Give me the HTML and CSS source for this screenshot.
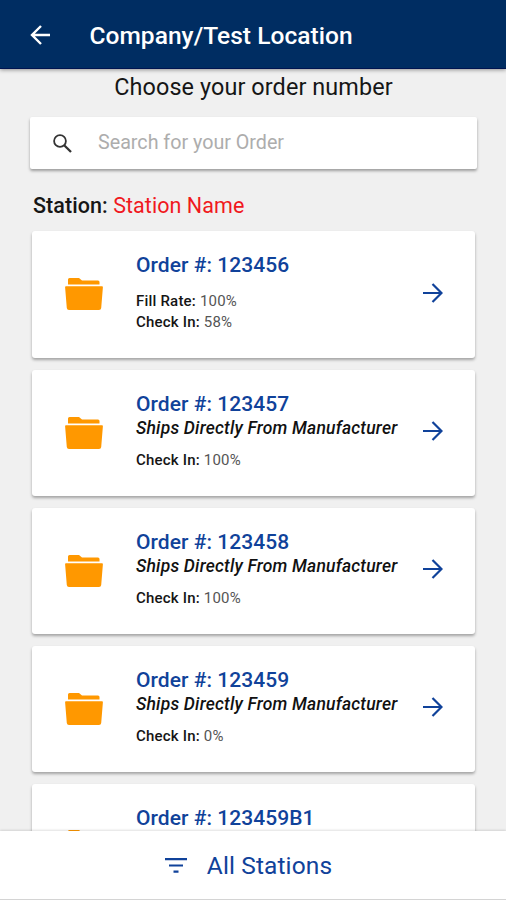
FILE: index.html
```html
<!DOCTYPE html>
<html lang="en">
<head>
<meta charset="utf-8">
<title>Company/Test Location</title>
<link rel="stylesheet" href="styles.css">
</head>
<body>
<svg class="defs" width="0" height="0">
  <symbol id="folder" viewBox="0 0 38 32"><path d="M3 6.600V1.500Q3 0 4.500 0H14L17 2.500H33Q34.500 2.500 34.500 4V6.600Z"/><path d="M1 8.200H37Q38 8.200 37.900 9.300L36.200 30Q36 32 34 32H4Q2 32 1.800 30L.1 9.300Q0 8.200 1 8.200Z"/></symbol>
  <symbol id="arrow" viewBox="0 0 20 20"><path d="M0 10H18M9.500 1L18.500 10L9.500 19" fill="none" stroke="currentColor" stroke-width="2.200"/></symbol>
</svg>
<div class="screen">
  <header class="bar">
    <svg class="back" viewBox="0 0 20 20"><path d="M20 10H2M11 1L2 10L11 19" fill="none" stroke="currentColor" stroke-width="2.400"/></svg>
    <h1 class="title">Company/Test Location</h1>
  </header>
  <main class="content">
    <h2 class="prompt"><span>Choose your order number</span></h2>
    <div class="search">
      <svg class="glass" viewBox="0 0 19 19"><circle cx="7" cy="7" r="5.900" fill="none" stroke="currentColor" stroke-width="1.800"/><path d="M11.200 11.200L18 18" stroke="currentColor" stroke-width="2.300"/></svg>
      <span class="placeholder">Search for your Order</span>
    </div>
    <p class="station"><b>Station:</b> <span class="station-name">Station Name</span></p>
    <section class="orders">
      <article class="card tall">
        <svg class="folder"><use href="#folder"/></svg>
        <div class="info">
          <h3 class="order">Order #: 123456</h3>
          <p class="stat first"><b>Fill Rate:</b> 100%</p>
          <p class="stat"><b>Check In:</b> 58%</p>
        </div>
        <svg class="arrow"><use href="#arrow"/></svg>
      </article>
      <article class="card">
        <svg class="folder"><use href="#folder"/></svg>
        <div class="info">
          <h3 class="order">Order #: 123457</h3>
          <p class="ships">Ships Directly From Manufacturer</p>
          <p class="stat"><b>Check In:</b> 100%</p>
        </div>
        <svg class="arrow"><use href="#arrow"/></svg>
      </article>
      <article class="card">
        <svg class="folder"><use href="#folder"/></svg>
        <div class="info">
          <h3 class="order">Order #: 123458</h3>
          <p class="ships">Ships Directly From Manufacturer</p>
          <p class="stat"><b>Check In:</b> 100%</p>
        </div>
        <svg class="arrow"><use href="#arrow"/></svg>
      </article>
      <article class="card">
        <svg class="folder"><use href="#folder"/></svg>
        <div class="info">
          <h3 class="order">Order #: 123459</h3>
          <p class="ships">Ships Directly From Manufacturer</p>
          <p class="stat"><b>Check In:</b> 0%</p>
        </div>
        <svg class="arrow"><use href="#arrow"/></svg>
      </article>
      <article class="card last">
        <svg class="folder"><use href="#folder"/></svg>
        <div class="info">
          <h3 class="order">Order #: 123459B1</h3>
        </div>
      </article>
    </section>
  </main>
  <footer class="stations">
    <svg class="filter" viewBox="0 0 22 15"><path d="M0 1.200H22M4 7.500H18M8.500 13.700H13.500" stroke="currentColor" stroke-width="2.200"/></svg>
    <span class="all">All Stations</span>
  </footer>
</div>
</body>
</html>
```
FILE: styles.css
```css
* { box-sizing: border-box; }
body, h1, h2, h3, p { margin: 0; }
body { font-family: Roboto, "Liberation Sans", sans-serif; color: #161616; background: #f0f0f0; }
.defs { display: block; }
.screen { height: 900px; display: flex; flex-direction: column; overflow: hidden; }
svg { flex: none; }

.bar { position: relative; flex: none; height: 69px; padding-left: 30px; display: flex; align-items: center; gap: 39.500px; background: #002d62; color: #fff; border-bottom: 1px solid #001450; box-shadow: 0 1px 4px rgba(0,0,0,.4); }
.back { width: 20px; height: 20px; margin-top: 2px; }
.title { font-size: 24.500px; line-height: 28px; font-weight: 500; letter-spacing: .04px; margin-top: 3px; white-space: nowrap; }

.content { flex: 1; min-height: 0; overflow: hidden; padding: 0 29px; }
.prompt { text-align: center; font-size: 23.400px; line-height: 28px; font-weight: 400; letter-spacing: .1px; padding: 4px 0 0 1px; white-space: nowrap; }
.search { height: 52px; margin: 16px 0 0 1px; padding-left: 22.500px; display: flex; align-items: center; gap: 26.500px; background: #fff; border-radius: 2px; box-shadow: 0 2px 3px rgba(0,0,0,.35); }
.glass { width: 19px; height: 19px; color: #333; }
.placeholder { font-size: 19.700px; color: #adadad; margin-top: -2px; white-space: nowrap; }
.station { font-size: 21.500px; line-height: 26px; letter-spacing: .06px; margin: 24px 0 0 4px; white-space: nowrap; }
.station b { font-weight: 500; }
.station-name { color: #f01820; }

.orders { margin: 12px 2px 0 3px; display: flex; flex-direction: column; gap: 12px; }
.card { height: 126px; flex: none; padding: 0 32px 0 33px; display: flex; align-items: flex-start; background: #fff; border-radius: 3px; box-shadow: 0 2px 3px rgba(0,0,0,.32); }
.card.tall { height: 127px; }
.folder { width: 38px; height: 32px; margin-top: 47px; fill: #ff9800; }
.last .folder { margin-top: 46px; }
.info { flex: 1; min-width: 0; margin-left: 33px; padding-top: 21px; white-space: nowrap; }
.order { font-size: 21px; line-height: 26px; font-weight: 500; letter-spacing: .05px; color: #10429a; }
.ships { font-size: 17.500px; line-height: 22px; font-style: italic; font-weight: 500; letter-spacing: .2px; margin: 0 0 11px; color: #111; }
.stat { font-size: 15px; line-height: 21px; letter-spacing: .2px; color: #555; }
.stat b { font-weight: 500; color: #151515; }
.stat.first { margin-top: 13px; }
.arrow { width: 20px; height: 20px; margin-top: 51px; color: #10429a; }
.tall .arrow { margin-top: 52px; }

.stations { position: relative; flex: none; height: 69px; padding-right: 9px; display: flex; align-items: center; justify-content: center; gap: 20px; background: #fff; border-bottom: 1px solid #d4d4d4; box-shadow: 0 -1px 2px rgba(0,0,0,.12); color: #10429a; }
.filter { width: 22px; height: 15px; }
.all { font-size: 24.500px; line-height: 28px; letter-spacing: .12px; margin-top: 2px; white-space: nowrap; }
```
